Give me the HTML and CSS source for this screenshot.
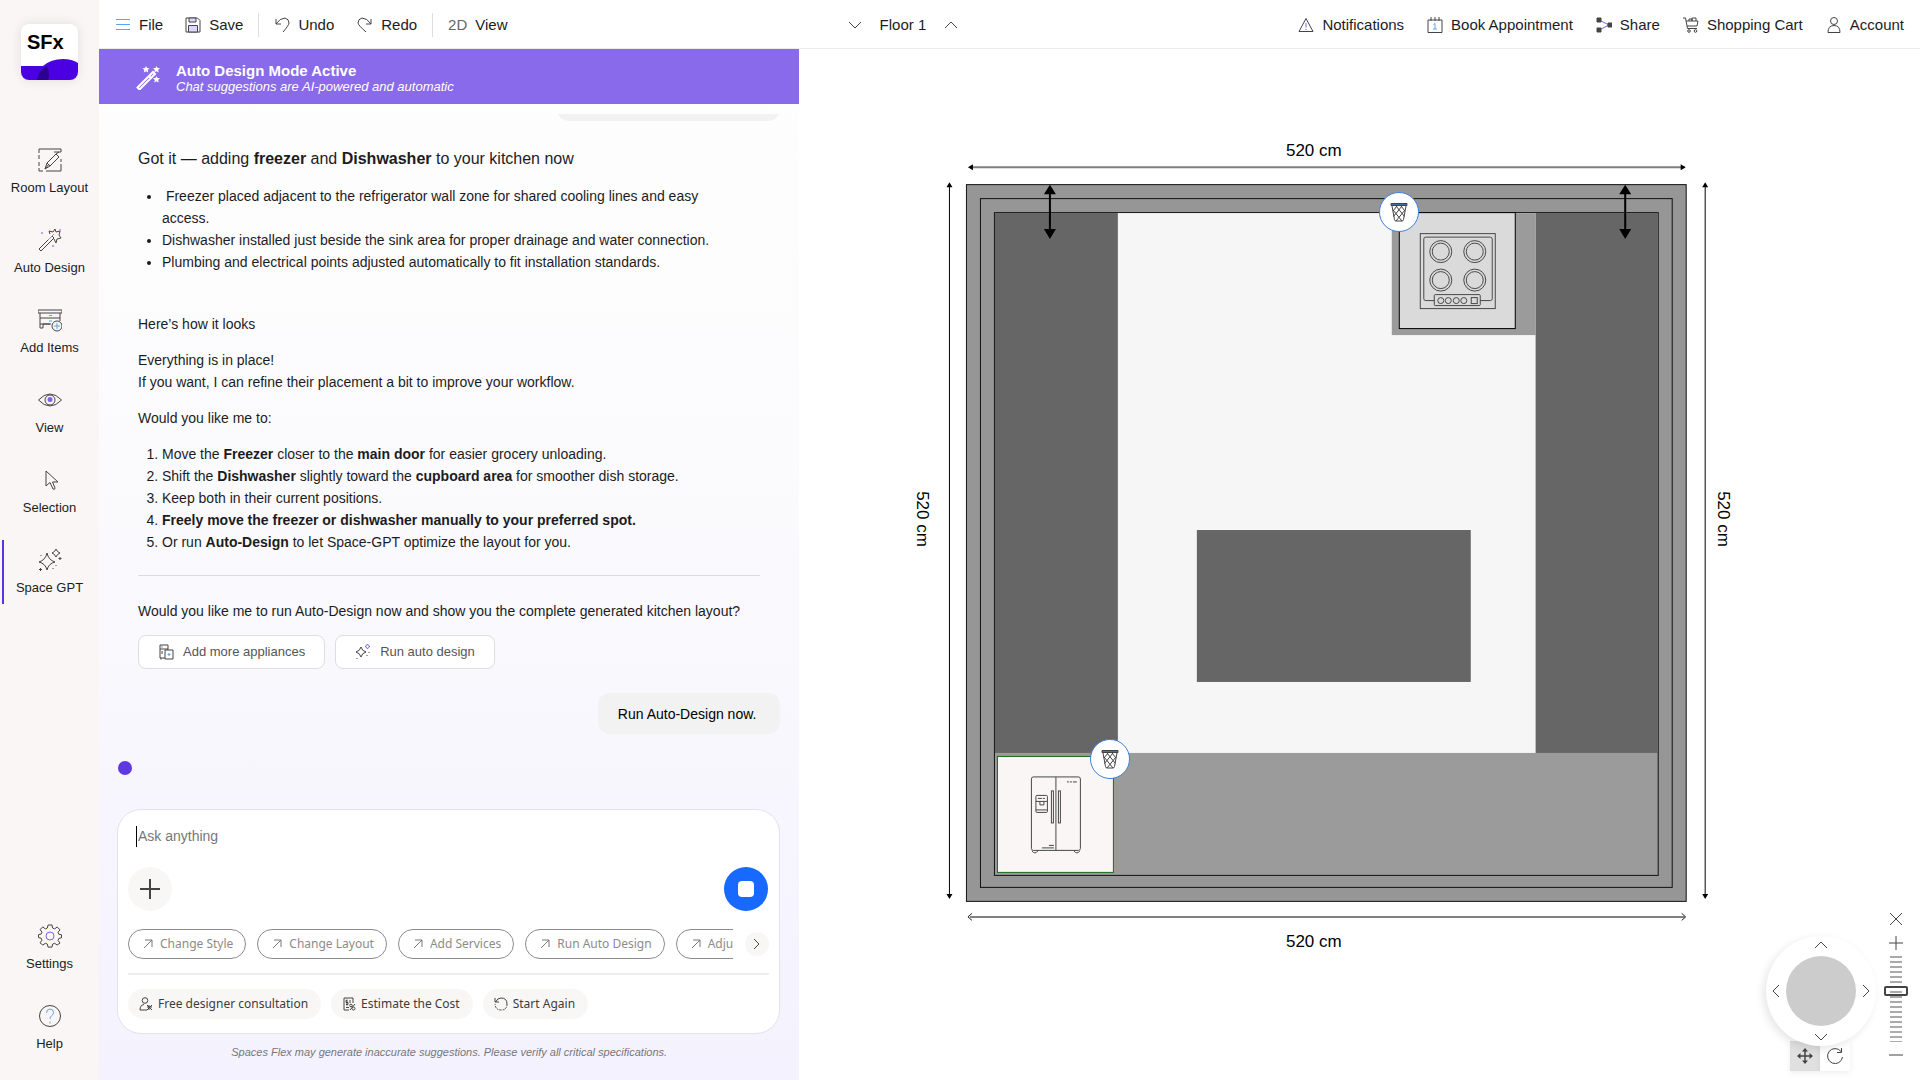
FILE: index.html
```html
<!DOCTYPE html>
<html lang="en">
<head>
<meta charset="utf-8">
<meta name="viewport" content="width=device-width, initial-scale=1">
<title>Spaces Flex</title>
<link rel="stylesheet" href="styles.css">
</head>
<body>
<svg class="defs" aria-hidden="true">
  <symbol id="i-out" viewBox="0 0 10 10"><path d="M1 9 9 1M2 1h7v7"/></symbol>
  <symbol id="i-bin" viewBox="0 0 20 20">
    <path d="M2 1.500h16v2H2z" fill="#4a6b9c" stroke="#444"/>
    <path d="M3 4l2.500 13.500q.2 1.500 1.500 1.500h6q1.300 0 1.500-1.500L17 4M4 8l9 11M7 4l8.500 10.500M12 4l4 5M16 8L7 19M13 4L4.500 14.500M8 4L4 9" fill="none" stroke="#444"/>
  </symbol>
  <symbol id="i-up" viewBox="0 0 14 8"><path d="M1 7l6-6 6 6"/></symbol>
</svg>

<aside class="sidebar">
  <a class="logo" href="#" aria-label="SFx home">
    <span class="logo-text">SFx</span>
    <svg class="logo-wave" viewBox="0 0 57 21" preserveAspectRatio="none" aria-hidden="true">
      <path d="M0 7h22Q30 0 42 0q9 0 15 4v17H0z" fill="#4a00e0"/>
      <path d="M16 21Q18 11 25 7q5 5 2 14z" fill="#2c0092"/>
    </svg>
  </a>
  <nav class="side-nav" aria-label="Tools">
    <a class="side-item" href="#">
      <svg class="icon" viewBox="0 0 24 24"><path d="M1 5V1h22v3h-7M1 7v4M1 14v4M1 20v3h4M8 23h15v-7M23 14v-3M7 21l2-6 9-9 3 3-9 9zM9 15l3 3M18 6l3-2M7 21l4-5"/></svg>
      <span>Room Layout</span></a>
    <a class="side-item" href="#">
      <svg class="icon" viewBox="0 0 24 24"><path d="M1 21L14 8l2 2L3 23zM12 6l-1-3 4 1 2-3 1 3 4-1-1 4 2 3-4 1-1 4-2-4"/><path d="M10 12l6-6" class="blue"/><path d="M3 5h2M21 2h2M14 18h2" class="pink"/></svg>
      <span>Auto Design</span></a>
    <a class="side-item" href="#">
      <svg class="icon" viewBox="0 0 24 24"><path d="M0 2h24v3H0zM2 5v15h3v-4h8M2 10h20M22 5v8M2 16h10"/><circle cx="19" cy="18" r="5"/><path d="M11 7.500h3M11 13h3M19 15v6M16 18h6" class="blue"/></svg>
      <span>Add Items</span></a>
    <a class="side-item" href="#">
      <svg class="icon" viewBox="0 0 24 24"><path d="M.5 12Q6 6 12 6t11.500 6Q18 18 12 18T.5 12z"/><circle cx="12" cy="12" r="5"/><circle cx="12" cy="11.500" r="2.500" fill="#7a64ea" stroke="none"/></svg>
      <span>View</span></a>
    <a class="side-item" href="#">
      <svg class="icon" viewBox="0 0 24 24"><path d="M8 3v15l4-3.500L15 21q2 1 2-1l-2.500-6H20z"/></svg>
      <span>Selection</span></a>
    <a class="side-item active" href="#" aria-current="page">
      <svg class="icon" viewBox="0 0 24 24"><path d="M9 5q1.500 7 8 9-6.500 1.500-8 8-1.500-6.500-8-8 6.500-2 8-9zM18 1q1 3 4 4-3 1-4 4-1-3-4-4 3-1 4-4zM22 9v3M20.500 10.500h3M2.500 20v3M1 21.500h3M18 17v1M15 20v1M3 7v1"/></svg>
      <span>Space GPT</span></a>
  </nav>
  <nav class="side-nav" aria-label="Support">
    <a class="side-item" href="#">
      <svg class="icon" viewBox="0 0 24 24"><path d="M10 1h4l.6 3 2 .9L19.200 3 22 5.800l-2 2.500.9 2 2.600.5v3l-2.600.6-.9 2 2 2.600L19.200 21l-2.600-1.700-2 .8-.6 3h-4l-.6-3-2-.8L4.800 21 2 18.800l2-2.600-.9-2-2.600-.6v-3l2.600-.5.9-2-2-2.500L4.800 3l2.600 1.900 2-.9z"/><circle cx="12" cy="12" r="4" class="violet"/></svg>
      <span>Settings</span></a>
    <a class="side-item" href="#">
      <svg class="icon" viewBox="0 0 24 24"><circle cx="12" cy="12" r="10.500"/><path d="M8.500 9q.2-4 3.700-4 3.300.2 3.300 3.500 0 2-2 3.300-1.500 1-1.500 3.200M12 17.500v2" class="blue"/></svg>
      <span>Help</span></a>
  </nav>
</aside>

<div class="app">
  <header class="toolbar">
    <div class="group tools">
      <button type="button"><svg class="i16" viewBox="0 0 16 16"><path d="M1 2.500h14M1 7.500h14M1 12.500h14" class="blue"/></svg>File</button>
      <button type="button"><svg class="i16" viewBox="0 0 16 16"><path d="M1 1h11.500L15 3.500V15H1z"/><path d="M4 1h7v4H4zM3.500 8.500h9V15h-9z" fill="#ddd6ff"/></svg>Save</button>
      <span class="sep"></span>
      <button type="button"><svg class="i16" viewBox="0 0 16 16"><path d="M2 2v5h5M2 7Q6 1 11 1q4 1 4 5 0 2-6 9"/></svg>Undo</button>
      <button type="button" class="redo"><svg class="i16" viewBox="0 0 16 16"><path d="M14 2v5H9M14 7Q10 1 5 1 1 2 1 6q0 2 8 9"/></svg>Redo</button>
      <span class="sep"></span>
      <button type="button"><span class="dim">2D</span>View</button>
    </div>
    <div class="group floor">
      <button type="button" aria-label="Floor down"><svg class="chev down"><use href="#i-up"/></svg></button>
      <span>Floor 1</span>
      <button type="button" aria-label="Floor up"><svg class="chev"><use href="#i-up"/></svg></button>
    </div>
    <div class="group links">
      <a href="#"><svg class="i16" viewBox="0 0 16 16"><path d="M8 1.500L15 14.500H1z"/><path d="M8 6v4.500M8 12v1" class="violet"/></svg>Notifications</a>
      <a href="#"><svg class="i16" viewBox="0 0 16 16"><path d="M1 3h14v12.500H1zM4 0v4M8 0v4M12 0v4"/><path d="M6.500 7.500L8 6.500V12M6 12h4" class="blue"/></svg>Book Appointment</a>
      <a href="#"><svg class="i16" viewBox="0 0 16 16"><path d="M3 3l10 5-10 5" class="violet"/><path d="M1 1h4v4H1zM12 6h4v4h-4zM1 11h4v4H1z" fill="#444"/></svg>Share</a>
      <a href="#"><svg class="i16" viewBox="0 0 16 16"><path d="M0 1h2.500l2 10.500H14M3 4h12l-1 5H4M6 4V2h3v2M9 4V1h4v3"/><circle cx="6" cy="14" r="1.300"/><circle cx="12.500" cy="14" r="1.300"/></svg>Shopping Cart</a>
      <a href="#"><svg class="i16" viewBox="0 0 16 16"><circle cx="8" cy="4" r="3.500"/><path d="M2 15.500q0-7 6-7t6 7z"/></svg>Account</a>
    </div>
  </header>

  <div class="workspace">
    <section class="chat">
      <div class="banner">
        <svg class="wand" viewBox="0 0 24 24" aria-hidden="true"><path d="M1.500 21.500L17 6l2 2L3.500 23.500zM13 10l2 2" fill="none" stroke="#fff" stroke-width="2"/><path d="M10 0l1 2 2.500.3-1.800 1.700.5 2.500L10 5.200 7.800 6.500 8.300 4 6.500 2.300 9 2zM20.500 0l1 2 2.500.3L22.200 4l.5 2.500-2.200-1.300-2.200 1.300.5-2.500L17 2.300l2.500-.3zM20.500 10l1 2 2.500.3-1.800 1.700.5 2.500-2.200-1.300-2.200 1.300.5-2.500-1.800-1.700 2.500-.3z" fill="#fff"/></svg>
        <div><strong>Auto Design Mode Active</strong><em>Chat suggestions are AI-powered and automatic</em></div>
      </div>

      <div class="messages">
        <div class="bubble earlier">Add freezer and Dishwasher.</div>
        <article class="reply">
          <h2>Got it — adding <b>freezer</b> and <b>Dishwasher</b> to your kitchen now</h2>
          <ul>
            <li>&nbsp;Freezer placed adjacent to the refrigerator wall zone for shared cooling lines and easy access.</li>
            <li>Dishwasher installed just beside the sink area for proper drainage and water connection.</li>
            <li>Plumbing and electrical points adjusted automatically to fit installation standards.</li>
          </ul>
          <p>Here’s how it looks</p>
          <p>Everything is in place!<br>If you want, I can refine their placement a bit to improve your workflow.</p>
          <p>Would you like me to:</p>
          <ol>
            <li>Move the <b>Freezer</b> closer to the <b>main door</b> for easier grocery unloading.</li>
            <li>Shift the <b>Dishwasher</b> slightly toward the <b>cupboard area</b> for smoother dish storage.</li>
            <li>Keep both in their current positions.</li>
            <li><b>Freely move the freezer or dishwasher manually to your preferred spot.</b></li>
            <li>Or run <b>Auto-Design</b> to let Space-GPT optimize the layout for you.</li>
          </ol>
          <hr>
          <p class="ask">Would you like me to run Auto-Design now and show you the complete generated kitchen layout?</p>
          <div class="choices">
            <button type="button"><svg class="i16" viewBox="0 0 16 16"><path d="M2 14V1h8v5M2 5h8M2 14h5M4 2.500v1M4 7v3M3 14v1.500M7 6h8v9H7z"/><path d="M9.500 10.500h3M11 9v3" class="blue"/></svg>Add more appliances</button>
            <button type="button"><svg class="i16" viewBox="0 0 16 16"><path d="M6 3q1 4 5 5-4 1-5 5-1-4-5-5 4-1 5-5zM12 11v1M14 8v1M2 14v1"/><path d="M12.500 0q.5 2 2.500 2.500-2 .5-2.500 2.500-.5-2-2.500-2.500 2-.5 2.500-2.500z" class="violet"/></svg>Run auto design</button>
          </div>
        </article>
        <div class="bubble">Run Auto-Design now.</div>
        <span class="typing" role="status" aria-label="Working"></span>
      </div>

      <form class="composer">
        <label class="prompt"><span class="caret"></span><input type="text" placeholder="Ask anything" aria-label="Ask anything"></label>
        <div class="actions">
          <button type="button" class="plus" aria-label="Add attachment"><svg viewBox="0 0 20 20"><path d="M10 0v20M0 10h20"/></svg></button>
          <button type="button" class="stop" aria-label="Stop"><span></span></button>
        </div>
        <div class="suggest">
          <div class="chips">
            <button type="button"><svg><use href="#i-out"/></svg>Change Style</button>
            <button type="button"><svg><use href="#i-out"/></svg>Change Layout</button>
            <button type="button"><svg><use href="#i-out"/></svg>Add Services</button>
            <button type="button"><svg><use href="#i-out"/></svg>Run Auto Design</button>
            <button type="button"><svg><use href="#i-out"/></svg>Adjust Layout</button>
          </div>
          <button type="button" class="next" aria-label="More suggestions"><svg viewBox="0 0 8 12"><path d="M1 1l5 5-5 5"/></svg></button>
        </div>
        <div class="shortcuts">
          <button type="button"><svg viewBox="0 0 14 14"><circle cx="6" cy="3.500" r="2.800"/><path d="M8 13H1q0-5 4-5.500M8 8l5 5M13 8l-5 5M8 10h5M10 8v5"/></svg>Free designer consultation</button>
          <button type="button"><svg viewBox="0 0 14 14"><path d="M2 1h9v5M2 1v12h5M5 3.500H4v2h2v2H4M5 2.500v6M8 3v3M4 10.500h3M8 13l5-6"/><circle cx="9" cy="8.500" r="1.300"/><circle cx="11.500" cy="11.500" r="1.500"/></svg>Estimate the Cost</button>
          <button type="button"><svg viewBox="0 0 14 14"><path d="M1 1v4h4M1.500 5Q3.500 1 7 1q6 0 6 6"/><path d="M13 7q0 6-6 6-5.500 0-6-6" stroke-dasharray="2 1"/></svg>Start Again</button>
        </div>
      </form>
      <p class="note">Spaces Flex may generate inaccurate suggestions. Please verify all critical specifications.</p>
    </section>

    <main class="canvas">
      <svg class="plan" viewBox="799 49 1121 1031" role="img" aria-label="Kitchen floor plan">
        <g stroke="#111">
          <rect x="966.500" y="184.500" width="720" height="717" fill="#969696"/>
          <rect x="980.500" y="198.500" width="692" height="689" fill="#969696"/>
          <rect x="994.500" y="212.500" width="664" height="663" fill="#9b9b9b"/>
        </g>
        <rect x="995" y="213" width="123" height="540" fill="#666"/>
        <rect x="1118" y="213" width="418" height="540" fill="#f6f6f6"/>
        <rect x="1536" y="213" width="122" height="540" fill="#666"/>
        <rect x="1197" y="530" width="274" height="152" fill="#666"/>
        <rect x="1392" y="213" width="144" height="122" fill="#9b9b9b"/>
        <rect x="1399.500" y="212.500" width="116" height="116" fill="#dadada" stroke="#000"/>
        <g fill="none" stroke="#484848">
          <rect x="1420.500" y="233.500" width="75" height="75"/>
          <rect x="1424" y="237" width="68.500" height="63.500" rx="2"/>
          <g><circle cx="1441" cy="251.500" r="11"/><circle cx="1441" cy="251.500" r="8.500"/><circle cx="1475" cy="251.500" r="11"/><circle cx="1475" cy="251.500" r="8.500"/><circle cx="1441" cy="280" r="11"/><circle cx="1441" cy="280" r="8.500"/><circle cx="1475" cy="280" r="11"/><circle cx="1475" cy="280" r="8.500"/></g>
          <rect x="1434.500" y="294.500" width="46" height="11" rx="1" fill="#dadada"/>
          <circle cx="1441" cy="300.500" r="3"/><circle cx="1448.500" cy="300.500" r="3"/><circle cx="1456.500" cy="300.500" r="3"/><circle cx="1464" cy="300.500" r="3"/><rect x="1471.500" y="297.500" width="6" height="6"/>
        </g>
        <rect x="997.500" y="756.500" width="116" height="116" fill="#f9f6f5" stroke="#1b6b1b"/>
        <g fill="none" stroke="#484848">
          <rect x="1031.500" y="777" width="49" height="73.500" rx="2"/>
          <path d="M1056 777v73.500M1067 782h2M1070 782h2M1073 782h4M1042 848h12M1049 845.500h5M1032 851q3 4 6 0M1074 851q3 4 6 0M1036 801.500h11M1036 810h11M1040 802v3h4v-3M1038 798.500h4M1043 798.500h2"/>
          <rect x="1036" y="795.500" width="11.500" height="17" rx="1"/>
          <rect x="1051.500" y="791" width="2" height="32"/><rect x="1058.500" y="791" width="2" height="32"/>
        </g>
        <path d="M970 167h715M970 917h715" stroke="#808080" stroke-width="2"/>
        <path d="M949.500 184v713M1705.500 184v713" stroke="#000"/>
        <path d="M968 167l5-3v6zM1686 167l-5-3v6zM949.500 182l-3 5h6zM949.500 899l-3-5h6zM1705.500 182l-3 5h6zM1705.500 899l-3-5h6z"/>
        <path d="M972 913.500l-4 3.500 4 3.500M1682 913.500l4 3.500-4 3.500" fill="none" stroke="#222"/>
        <path d="M1050 190v43M1625.500 190v43" stroke="#000" stroke-width="2"/>
        <path d="M1050 184.500l-6 9.500h12zM1050 239l-6-10h12zM1625.500 184.500l-6 9.500h12zM1625.500 239l-6-10h12z"/>
        <g class="dims">
          <text x="1314" y="156">520 cm</text>
          <text x="1314" y="947">520 cm</text>
          <text transform="translate(917 519) rotate(90)">520 cm</text>
          <text transform="translate(1718 519) rotate(90)">520 cm</text>
        </g>
      </svg>
      <button type="button" class="bin bin-hob" aria-label="Delete hob"><svg><use href="#i-bin"/></svg></button>
      <button type="button" class="bin bin-fridge" aria-label="Delete refrigerator"><svg><use href="#i-bin"/></svg></button>

      <div class="navigator">
        <div class="pad-wrap">
          <div class="pad">
            <button type="button" aria-label="Pan up"><svg class="chev"><use href="#i-up"/></svg></button>
            <div class="pad-row">
              <button type="button" aria-label="Pan left"><svg class="chev left"><use href="#i-up"/></svg></button>
              <span class="knob"></span>
              <button type="button" aria-label="Pan right"><svg class="chev right"><use href="#i-up"/></svg></button>
            </div>
            <button type="button" aria-label="Pan down"><svg class="chev down"><use href="#i-up"/></svg></button>
          </div>
          <div class="modes">
            <button type="button" class="on" aria-label="Move"><svg class="i16" viewBox="0 0 16 16"><path d="M8 2v12M2 8h12" stroke-width="1.500"/><path d="M8 0l3 3.500H5zM8 16l3-3.500H5zM0 8l3.500-3v6zM16 8l-3.500-3v6z" fill="#444" stroke="none"/></svg></button>
            <button type="button" aria-label="Rotate"><svg class="i16" viewBox="0 0 16 16"><path d="M14 3.500A7.500 7.500 0 1 0 15.500 9M14.500 0v4.500H10"/></svg></button>
          </div>
        </div>
        <div class="zoom">
          <button type="button" class="close" aria-label="Close"><svg viewBox="0 0 14 14"><path d="M1 1l12 12M13 1L1 13"/></svg></button>
          <button type="button" aria-label="Zoom in"><svg viewBox="0 0 14 14"><path d="M7 0v14M0 7h14"/></svg></button>
          <input type="range" min="0" max="100" value="60" aria-label="Zoom">
          <button type="button" aria-label="Zoom out"><svg viewBox="0 0 14 14"><path d="M0 7h14"/></svg></button>
        </div>
      </div>
    </main>
  </div>
</div>
</body>
</html>
```
FILE: styles.css
```css
* { box-sizing: border-box; }
body {
  margin: 0;
  display: flex;
  height: 100vh;
  font: 15px/22px "Liberation Sans", Arial, sans-serif;
  color: #1c1c1e;
  background: #fff;
}
button, input { font: inherit; color: inherit; }
button { display: flex; align-items: center; justify-content: center; padding: 0; border: 0; background: none; cursor: pointer; white-space: nowrap; }
a { color: inherit; text-decoration: none; }
p, h2, ul, ol { margin: 0; }
svg { fill: none; stroke: #444; flex: none; }
.defs { position: absolute; width: 0; height: 0; }
.blue { stroke: #5aa5f0; }
.violet { stroke: #7a64ea; }
.pink { stroke: #cf9cf5; stroke-width: 2; }
.i16 { width: 16px; height: 16px; }
.chev { width: 14px; height: 8px; }
.down { transform: rotate(180deg); }
.left { transform: rotate(-90deg); }
.right { transform: rotate(90deg); }

/* Sidebar */
.sidebar {
  flex: 0 0 99px;
  display: flex;
  flex-direction: column;
  align-items: stretch;
  padding: 24px 0 20px;
  background: #f9f6f5;
}
.logo {
  display: flex;
  flex-direction: column;
  justify-content: space-between;
  align-self: center;
  width: 57px;
  height: 56px;
  margin-bottom: 60px;
  border-radius: 8px;
  overflow: hidden;
  background: #fff;
  box-shadow: 0 0 12px #0000001a;
}
.logo-text { padding: 4px 6px 0; font: bold 20px/28px "Liberation Sans", sans-serif; color: #000; }
.logo-wave { width: 100%; height: 21px; stroke: none; }
.side-nav { display: flex; flex-direction: column; gap: 16px; }
.side-nav + .side-nav { margin-top: auto; }
.side-item {
  display: flex;
  flex-direction: column;
  align-items: center;
  gap: 7px;
  height: 64px;
  padding-top: 8px;
  font-size: 13px;
  line-height: 18px;
}
.side-item.active { background: linear-gradient(#5b35d5, #5b35d5) 2px 0 / 2px 100% no-repeat; }
.icon { width: 24px; height: 24px; }

/* Toolbar */
.app { flex: 1; min-width: 0; display: flex; flex-direction: column; }
.toolbar {
  flex: 0 0 49px;
  display: flex;
  align-items: center;
  justify-content: space-between;
  padding: 2px 16px 0;
  border-bottom: 1px solid #ececec;
}
.group, .group a { display: flex; align-items: center; white-space: nowrap; }
.tools { gap: 15px; }
.tools button { gap: 8px; }
.tools button:first-child { margin-right: 7px; }
.redo { margin-left: 8px; }
.sep { width: 1px; height: 24px; background: #ddd; }
.dim { color: #666; }
.floor { gap: 18px; }
.links { gap: 23px; }
.links a { gap: 8px; }

.workspace { flex: 1; min-height: 0; display: flex; }

/* Chat */
.chat {
  flex: 5 1 0;
  min-width: 0;
  display: flex;
  flex-direction: column;
  background: linear-gradient(#fefefe, #fbfbfd 40%, #f4f2fe);
}
.banner { display: flex; align-items: center; gap: 16px; height: 55px; padding: 3px 37px 0; background: #896aea; color: #fff; }
.banner div { display: flex; flex-direction: column; }
.banner strong { font-size: 15px; line-height: 17px; }
.banner em { font-size: 13px; line-height: 15px; }
.wand { width: 24px; height: 24px; stroke: none; }
.messages {
  flex: 1;
  min-height: 0;
  display: flex;
  flex-direction: column;
  justify-content: flex-end;
  overflow: hidden;
  margin-top: 10px;
  padding: 0 19px 34px;
  font-size: 14px;
}
.messages > * { flex: none; }
.bubble { align-self: flex-end; padding: 10px 24px 9px 20px; border-radius: 12px; background: #f2f2f2; color: #000; }
.earlier { margin-bottom: 26px; }
.reply { padding: 0 20px 24px; }
.reply h2 { font-size: 16px; line-height: 24px; font-weight: 400; }
.reply ul { margin: 14px 0 40px; }
.reply ul, .reply ol { padding: 0 24px; }
.reply p { margin-bottom: 14px; }
.reply hr { height: 1px; margin: 22px 0; border: 0; background: #dcdcdc; }
.reply .ask { margin: 24px 0 13px; }
.choices { display: flex; gap: 10px; }
.choices button { gap: 9px; height: 34px; padding: 0 19px; border: 1px solid #dedede; border-radius: 8px; background: #fff; font-size: 13px; color: #555; }
.typing { width: 14px; height: 14px; margin-top: 27px; border-radius: 50%; background: #5f38e0; }

.composer { margin: 0 19px 0 18px; padding: 14px 10px; border: 1px solid #e4e2ee; border-radius: 24px; background: #fff; }
.prompt { display: flex; align-items: center; padding-left: 8px; }
.caret { width: 1px; height: 21px; background: #000; }
.prompt input { flex: 1; height: 24px; padding: 0 1px; border: 0; outline: 0; background: none; font-size: 14px; }
.prompt input::placeholder { color: #777; }
.actions { display: flex; justify-content: space-between; margin: 19px 1px 18px 0; }
.plus, .stop { width: 44px; height: 44px; border-radius: 50%; }
.plus { background: #f9f7f6; }
.plus svg { width: 20px; height: 20px; stroke-width: 2; }
.stop { background: #1769ff; }
.stop span { width: 16px; height: 16px; border-radius: 4px; background: #fff; }
.suggest { display: flex; align-items: center; gap: 12px; padding-bottom: 14px; border-bottom: 2px solid #eee; }
.chips { flex: 1; min-width: 0; display: flex; gap: 11px; overflow: hidden; }
.chips button, .shortcuts button { flex: none; height: 30px; border-radius: 15px; font: 12px/18px "Noto Sans", sans-serif; }
.chips button { gap: 7px; padding: 0 12px 0 14px; border: 1px solid #8b8b8b; color: #8b8b8b; }
.chips svg { width: 10px; height: 10px; stroke: #777; }
.next { width: 24px; height: 24px; border-radius: 50%; background: #f9f7f6; }
.next svg { width: 8px; height: 12px; }
.shortcuts { display: flex; gap: 10px; margin-top: 14px; }
.shortcuts button { gap: 5px; padding: 0 13px 0 11px; background: #f9f7f6; color: #3c3c3c; }
.shortcuts svg { width: 14px; height: 14px; }
.note { padding: 9px 0 19px; font-size: 11px; line-height: 18px; font-style: italic; text-align: center; color: #777; }

/* Floor plan */
.canvas { position: relative; flex: 8 1 0; min-width: 0; }
.plan { display: block; width: 100%; height: 100%; stroke: none; fill: #000; }
.dims { font-size: 17px; text-anchor: middle; }
.bin { position: absolute; width: 40px; height: 40px; border: 1px solid #3d7fe0; border-radius: 50%; background: #fff; transform: translate(-50%, -50%); }
.bin svg { width: 20px; height: 20px; }
.bin-hob { left: 53.5%; top: 15.8%; }
.bin-fridge { left: 27.7%; top: 68.9%; }

/* Pan and zoom widget */
.navigator { position: absolute; right: 12px; bottom: 9px; display: flex; align-items: flex-end; gap: 8px; }
.pad { display: flex; flex-direction: column; align-items: center; justify-content: space-between; width: 110px; height: 110px; padding: 5px 6px; border-radius: 50%; background: #fff; box-shadow: -3px 3px 8px #0000001a; position: relative; }
.pad-row { display: flex; align-items: center; justify-content: space-between; align-self: stretch; }
.pad-row button { width: 8px; }
.knob { width: 70px; height: 70px; border-radius: 50%; background: #ccc; }
.modes { display: flex; margin: -5px 0 0 24px; }
.modes button { width: 30px; height: 30px; background: #fff; box-shadow: 0 2px 6px #00000012; }
.modes .on { background: #e0e0e0; }
.zoom { display: flex; flex-direction: column; align-items: center; gap: 5px; width: 24px; padding-bottom: 8px; }
.zoom svg { width: 14px; height: 14px; }
.zoom button { height: 16px; }
.zoom .close { margin-bottom: 3px; }
.zoom input {
  appearance: none;
  writing-mode: vertical-lr;
  direction: rtl;
  width: 24px;
  height: 86px;
  margin: 0;
  background: repeating-linear-gradient(#aaa 0 2px, transparent 2px 5px) center / 12px 100% no-repeat;
}
.zoom input::-webkit-slider-thumb { appearance: none; width: 24px; height: 10px; border: 2px solid #444; border-radius: 2px; background: transparent; }
```
